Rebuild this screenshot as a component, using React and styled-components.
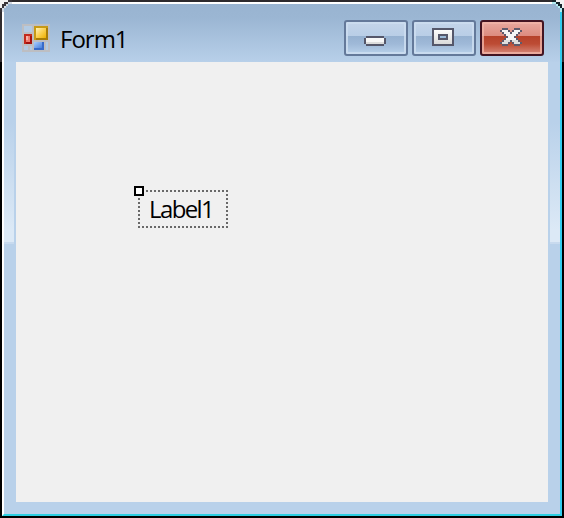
import React from "react";
import styled, { createGlobalStyle } from "styled-components";

const GlobalStyle = createGlobalStyle`
  * { box-sizing: border-box; }
  body { margin: 0; background: #000; font-family: "Open Sans", "Noto Sans", sans-serif; }
`;

const Desktop = styled.div`
  width: 564px;
  height: 518px;
  padding: 2px;
  background: linear-gradient(#2d2a2d 0, #353034 62px, #000 62px);
`;

const Window = styled.div`
  position: relative;
  width: 560px;
  height: 514px;
  border: 2px solid;
  border-color: #fff #33cdf0 #2ccfe2 #fff;
  background: #b9d1ea;
  display: flex;
  flex-direction: column;
`;

const TitleBar = styled.header`
  height: 58px;
  flex: none;
  display: flex;
  align-items: flex-start;
  padding: 16px 16px 0 18px;
  background: linear-gradient(#99b4d1 0, #9bb6d3 14px, #b9d1ea 60px);
`;

const AppIcon = styled.svg`
  width: 28px;
  height: 28px;
  margin-top: 4px;
`;

const Title = styled.h1`
  margin: 3px 0 0 10px;
  flex: 1;
  font-size: 24px;
  line-height: 32px;
  font-weight: 400;
  letter-spacing: -1px;
  color: #000;
`;

const Controls = styled.div`
  display: flex;
  gap: 4px;
`;

const CaptionButton = styled.button`
  width: 64px;
  height: 36px;
  padding: 0;
  border: 2px solid ${(p) => (p.$danger ? "#431422" : "#64799a")};
  border-radius: 3px;
  background: ${(p) =>
    p.$danger
      ? "linear-gradient(#e8a89f 0, #dc8b7f 14px, #b5412a 14px, #bd4c35 22px, #d78a7c 32px)"
      : "linear-gradient(#c4d5ea 0, #b9cee6 14px, #96b1d0 14px, #9fb9d8 22px, #b9d1ea 32px)"};
  background-origin: padding-box;
  box-shadow: inset 0 0 0 2px ${(p) => (p.$danger ? "rgba(240, 180, 168, 0.8)" : "rgba(205, 221, 240, 0.85)")};
  display: block;
`;

const Glyph = styled.svg`
  display: block;
  width: 60px;
  height: 32px;
`;

const Body = styled.div`
  flex: 1;
  display: grid;
  grid-template-columns: 12px 1fr 12px;
  grid-template-rows: 440px;
`;

const Side = styled.div`
  height: 182px;
  margin: ${(p) => (p.$right ? "0 0 0 2px" : "0 2px 0 0")};
  background: linear-gradient(#b9d1ea 0, #b9d1ea 60px, #dce9f6 168px, #dce9f6 180px, #c8daee 180px, #c8daee 182px);
`;

const Client = styled.main`
  position: relative;
  background: #f0f0f0;
`;

const Label = styled.div`
  position: absolute;
  left: 122px;
  top: 128px;
  width: 90px;
  height: 38px;
  padding-left: 11px;
  font-size: 24px;
  line-height: 38px;
  letter-spacing: -1.6px;
  color: #000;
`;

const Selection = styled.svg`
  position: absolute;
  left: -4px;
  top: -4px;
  width: 94px;
  height: 42px;
`;

const Corners = styled.svg`
  position: absolute;
  left: -4px;
  top: -4px;
  width: 564px;
  height: 14px;
`;

const CROSS = [
  ".###...###.",
  "#WWW#.#WWW#",
  ".#WWW#WWW#.",
  "..#WWWWW#..",
  "...#WWW#...",
  "..#WWWWW#..",
  ".#WWW#WWW#.",
  "#WWW#.#WWW#",
  ".###...###.",
];

function MinimizeGlyph() {
  return (
    <Glyph viewBox="0 0 60 32" shapeRendering="crispEdges">
      <path d="M20 14h18v2h2v6h-2v2H20v-2h-2v-6h2z" fill="#55576a" />
      <rect x="20" y="16" width="18" height="6" fill="#dcdcdc" />
      <rect x="20" y="16" width="18" height="4" fill="#f7f7f7" />
    </Glyph>
  );
}

function MaximizeGlyph() {
  return (
    <Glyph viewBox="0 0 60 32" shapeRendering="crispEdges">
      <defs>
        <linearGradient id="maxFill" x1="0" y1="0" x2="0" y2="1">
          <stop offset="0" stopColor="#fcfcfc" />
          <stop offset="1" stopColor="#dadada" />
        </linearGradient>
      </defs>
      <path d="M18 6h22v18H18z" fill="#55576a" />
      <rect x="20" y="8" width="18" height="14" fill="url(#maxFill)" />
      <rect x="24" y="12" width="10" height="6" fill="#55576a" />
      <rect x="26" y="14" width="6" height="2" fill="#9bbad8" />
    </Glyph>
  );
}

function CloseGlyph() {
  return (
    <Glyph viewBox="0 0 60 32" shapeRendering="crispEdges">
      {CROSS.flatMap((row, y) =>
        [...row].map((cell, x) =>
          cell === "." ? null : (
            <rect
              key={`${x}-${y}`}
              x={18 + x * 2}
              y={6 + y * 2}
              width="2"
              height="2"
              fill={cell === "#" ? "#5f5a6c" : y > 5 ? "#dedede" : "#f5f5f5"}
            />
          )
        )
      )}
    </Glyph>
  );
}

function FormIcon() {
  return (
    <AppIcon viewBox="0 0 28 28" shapeRendering="crispEdges">
      <defs>
        <linearGradient id="gold" x1="0" y1="0" x2="1" y2="1">
          <stop offset="0" stopColor="#fff3b8" />
          <stop offset=".5" stopColor="#fbd050" />
          <stop offset="1" stopColor="#efb000" />
        </linearGradient>
        <linearGradient id="azure" x1="0" y1="0" x2="1" y2="1">
          <stop offset="0" stopColor="#a9ceff" />
          <stop offset="1" stopColor="#477fdd" />
        </linearGradient>
      </defs>
      <path
        d="M1 1h26v26H1zM11 1v26M1 9h10M1 21h10M11 17h16M23 18v8M7 22v4"
        fill="#b3cbe4"
        stroke="#bdbec2"
        strokeWidth="2"
      />
      <rect x="12" y="2" width="14" height="14" fill="#a97c08" />
      <path d="M12 2h14v2H14v12h-2z" fill="#c79a16" />
      <rect x="14" y="4" width="10" height="10" fill="url(#gold)" />
      <rect x="2" y="10" width="8" height="10" fill="#a5120e" />
      <path d="M2 10h8v2H4v8H2z" fill="#c32a1c" />
      <rect x="4" y="12" width="4" height="6" fill="#ef7d70" />
      <rect x="4" y="12" width="2" height="4" fill="#f8b0a5" />
      <rect x="12" y="18" width="10" height="8" fill="#386bc9" />
      <rect x="12" y="18" width="8" height="6" fill="url(#azure)" />
    </AppIcon>
  );
}

function WindowCorners() {
  return (
    <Corners viewBox="0 0 564 14" shapeRendering="crispEdges">
      <path d="M0 0h8v2H4v2H2v4H0z" fill="#f2f2f2" />
      <path d="M8 0h4v2H8v2H6v2H4v2H2v4H0V8h2V4h2V2h4z" fill="#39353a" />
      <path d="M8 2h4v2H8v2H6v2H4v4H2V8h2V6h2V4h2z" fill="#d5dce5" />
      <path d="M556 0h8v8h-2V4h-2V2h-4z" fill="#f2f2f2" />
      <path d="M552 0h4v2h4v2h2v4h2v4h-2V8h-2V6h-2V4h-2V2h-4z" fill="#17252b" />
      <path d="M552 2h4v2h2v2h2v2h2v4h-2V8h-2V6h-2V4h-4z" fill="#b5edf2" />
    </Corners>
  );
}

export default function App() {
  return (
    <>
      <GlobalStyle />
      <Desktop>
        <Window>
          <TitleBar>
            <FormIcon />
            <Title>Form1</Title>
            <Controls>
              <CaptionButton aria-label="Minimize">
                <MinimizeGlyph />
              </CaptionButton>
              <CaptionButton aria-label="Maximize">
                <MaximizeGlyph />
              </CaptionButton>
              <CaptionButton $danger aria-label="Close">
                <CloseGlyph />
              </CaptionButton>
            </Controls>
          </TitleBar>
          <Body>
            <Side />
            <Client>
              <Label>
                Label1
                <Selection viewBox="0 0 94 42" shapeRendering="crispEdges">
                  <path
                    d="M4 5h90M4 41h90M5 4v38M93 4v38"
                    fill="none"
                    stroke="#696969"
                    strokeWidth="2"
                    strokeDasharray="2 2"
                  />
                  <rect x="1" y="1" width="8" height="8" fill="#fff" stroke="#000" strokeWidth="2" />
                </Selection>
              </Label>
            </Client>
            <Side $right />
          </Body>
          <WindowCorners />
        </Window>
      </Desktop>
    </>
  );
}
